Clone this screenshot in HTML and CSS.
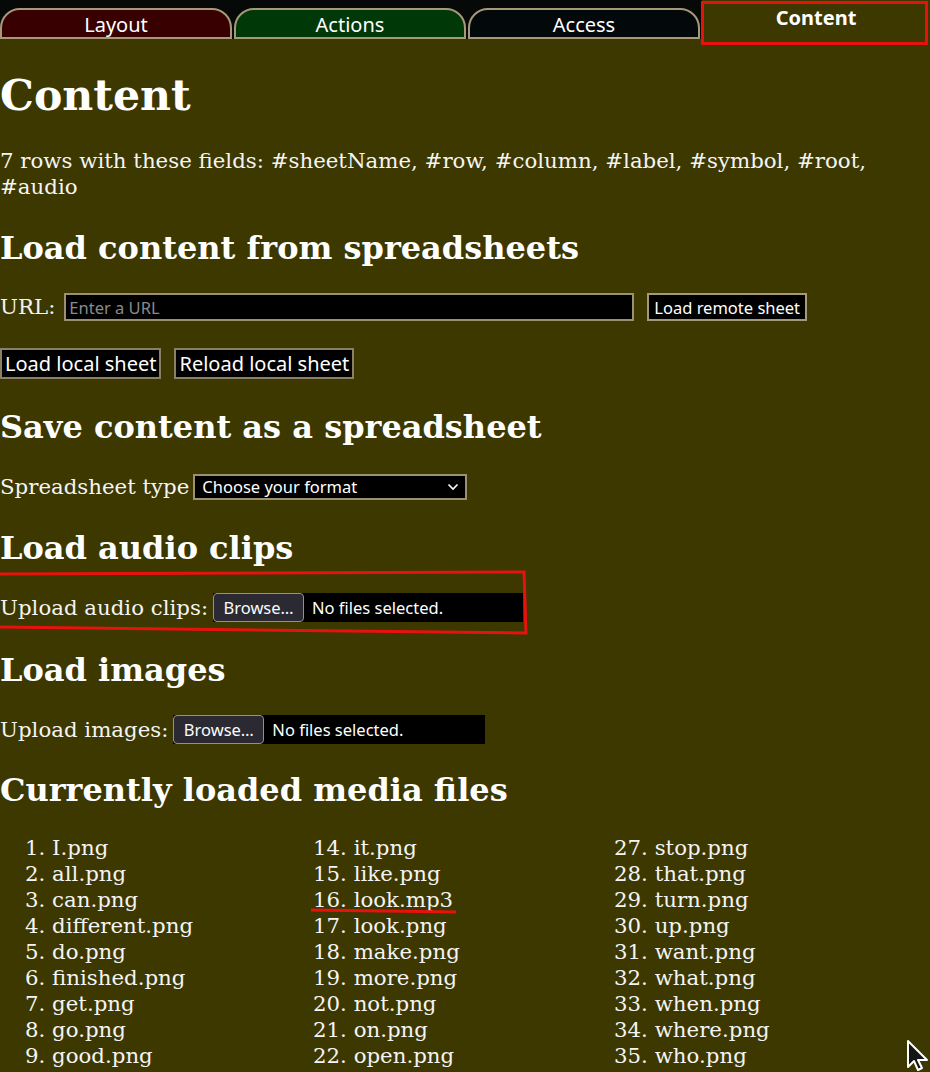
FILE: index.html
```html
<!DOCTYPE html>
<html lang="en">
<head>
    <meta charset="UTF-8">
    <meta name="viewport" content="width=device-width, initial-scale=1.0">
    <title>Content</title>
    <link rel="stylesheet" href="styles.css">
</head>
<body>
    <nav class="tabs">
        <div class="tab tab-layout">Layout</div>
        <div class="tab tab-actions">Actions</div>
        <div class="tab tab-access">Access</div>
        <div class="tab tab-content active">Content</div>
    </nav>

    <main class="panel">
        <h1>Content</h1>
        <p>7 rows with these fields: #sheetName, #row, #column, #label, #symbol, #root, #audio</p>

        <h2>Load content from spreadsheets</h2>
        <div class="row row-url">
            <label class="url-label">URL:</label>
            <input class="url" type="text" placeholder="Enter a URL">
            <button class="btn btn-small">Load remote sheet</button>
        </div>
        <div class="row row-url">
            <button class="btn">Load local sheet</button>
            <button class="btn">Reload local sheet</button>
        </div>

        <h2>Save content as a spreadsheet</h2>
        <div class="row row-select">
            <label>Spreadsheet type</label>
            <div class="select">
                <span>Choose your format</span>
                <svg width="12" height="8" viewBox="0 0 12 8"><path d="M1.5 1.5 L6 6 L10.5 1.5" fill="none" stroke="#fff" stroke-width="1.6"/></svg>
            </div>
        </div>

        <h2>Load audio clips</h2>
        <div class="row">
            <label>Upload audio clips:</label>
            <div class="file file-audio">
                <button class="browse">Browse…</button>
                <span class="file-name">No files selected.</span>
            </div>
        </div>

        <h2>Load images</h2>
        <div class="row row-images">
            <label>Upload images:</label>
            <div class="file">
                <button class="browse">Browse…</button>
                <span class="file-name">No files selected.</span>
            </div>
        </div>

        <h2>Currently loaded media files</h2>
        <ol class="media">
            <li>I.png</li>
            <li>all.png</li>
            <li>can.png</li>
            <li>different.png</li>
            <li>do.png</li>
            <li>finished.png</li>
            <li>get.png</li>
            <li>go.png</li>
            <li>good.png</li>
            <li>have.png</li>
            <li>help.png</li>
            <li>here.png</li>
            <li>in.png</li>
            <li>it.png</li>
            <li>like.png</li>
            <li>look.mp3</li>
            <li>look.png</li>
            <li>make.png</li>
            <li>more.png</li>
            <li>not.png</li>
            <li>on.png</li>
            <li>open.png</li>
            <li>play.png</li>
            <li>put.png</li>
            <li>read.png</li>
            <li>some.png</li>
            <li>stop.png</li>
            <li>that.png</li>
            <li>turn.png</li>
            <li>up.png</li>
            <li>want.png</li>
            <li>what.png</li>
            <li>when.png</li>
            <li>where.png</li>
            <li>who.png</li>
            <li>why.png</li>
            <li>you.png</li>
        </ol>
    </main>

    <!-- red review marks drawn over the page -->
    <div class="mark-tab"></div>
    <svg class="mark-audio" width="532" height="70" viewBox="0 0 532 70">
        <path d="M0 5 L524 3 L526 64 L0 58" fill="none" stroke="#e8120c" stroke-width="3"/>
    </svg>
    <svg class="mark-line" width="150" height="8" viewBox="0 0 150 8">
        <path d="M1 3 L146 5" fill="none" stroke="#e8120c" stroke-width="3"/>
    </svg>
    <svg class="cursor" width="26" height="34" viewBox="0 0 26 34">
        <path d="M2 2 L2 28 L8 22 L12 31 L16 29 L12 21 L21 21 Z" fill="#151515" stroke="#fff" stroke-width="2" stroke-linejoin="round"/>
    </svg>
</body>
</html>
```

FILE: styles.css
```css
body{
    margin: 0;
    background-color: #3c3800;
    color: #f4f4f4;
    font-family: "DejaVu Serif", serif;
    font-size: 21.3px;
    line-height: 26px;
}

/* tab bar */
.tabs{
    display: flex;
    align-items: flex-end;
    gap: 2px;
    height: 39px;
    background-color: #070808;
}
.tab{
    flex: 1;
    box-sizing: border-box;
    height: 31px;
    border: 2px solid #a59978;
    border-radius: 20px 20px 0 0;
    color: #fff;
    font-family: "Noto Sans", sans-serif;
    font-size: 20px;
    line-height: 29px;
    text-align: center;
}
.tab-layout{ background-color: #380000; }
.tab-actions{ background-color: #003808; }
.tab-access{ background-color: #03080b; }
.tab.active{
    height: 39px;
    border: none;
    border-radius: 0;
    background-color: #3c3800;
    font-weight: bold;
    line-height: 36px;
}

/* panel */
.panel{
    display: flex;
    flex-direction: column;
    gap: 27px;
    padding-top: 30px;
}
h1{
    margin: 0;
    font-size: 42.6px;
    line-height: 52px;
    color: #fff;
}
h2{
    margin: 0 0 -2px;
    padding-top: 2px;
    font-size: 32px;
    line-height: 39px;
    color: #fff;
}
p{
    margin: 0;
}
.row{
    display: flex;
    align-items: center;
    gap: 5px;
}
.row-url{
    gap: 13px;
}
.url-label{
    margin-right: -4px;
}
.row-select{
    gap: 4px;
    margin-top: 2px;
}
.row-images{
    margin-bottom: -2px;
}

.url{
    box-sizing: border-box;
    width: 570px;
    height: 28px;
    padding: 0 3px;
    background-color: #000;
    border: 2px solid #9c9070;
    color: #fff;
    font-family: "Noto Sans", sans-serif;
    font-size: 16.5px;
}
.url::placeholder{
    color: #8a8a8a;
}
.btn{
    box-sizing: border-box;
    height: 31px;
    padding: 0 3px;
    background-color: #000;
    border: 2px solid #8c8064;
    color: #fff;
    font-family: "Noto Sans", sans-serif;
    font-size: 20px;
}
.btn-small{
    height: 28px;
    padding: 0 5px;
    border-color: #a59978;
    font-size: 16.5px;
}

.select{
    box-sizing: border-box;
    display: flex;
    align-items: center;
    justify-content: space-between;
    width: 274px;
    height: 26px;
    padding: 0 6px 0 7px;
    background-color: #000;
    border: 2px solid #9c9070;
    color: #fff;
    font-family: "Noto Sans", sans-serif;
    font-size: 16.5px;
}

.file{
    display: flex;
    align-items: center;
    width: 312px;
    height: 29px;
    background-color: #000;
}
.file-audio{
    width: 310px;
}
.browse{
    box-sizing: border-box;
    width: 91px;
    height: 29px;
    padding: 0;
    background-color: #2b2a33;
    border: 1px solid #8f8f9d;
    border-radius: 4px;
    color: #fbfbfe;
    font-family: "Noto Sans", sans-serif;
    font-size: 16.5px;
}
.file-name{
    margin-left: 8px;
    color: #fff;
    font-family: "Noto Sans", sans-serif;
    font-size: 16.5px;
}

.media{
    display: grid;
    grid-template-columns: 288px 301px 1fr;
    grid-template-rows: repeat(13, 26px);
    grid-auto-flow: column;
    margin: 0;
    padding: 0 0 0 25px;
    list-style-position: inside;
}

/* review marks */
.mark-tab{
    position: absolute;
    left: 701px;
    top: 1px;
    width: 221px;
    height: 38px;
    border: 3px solid #e8120c;
}
.mark-audio{
    position: absolute;
    left: 0;
    top: 569px;
}
.mark-line{
    position: absolute;
    left: 310px;
    top: 907px;
}
.cursor{
    position: absolute;
    left: 906px;
    top: 1039px;
}
```
